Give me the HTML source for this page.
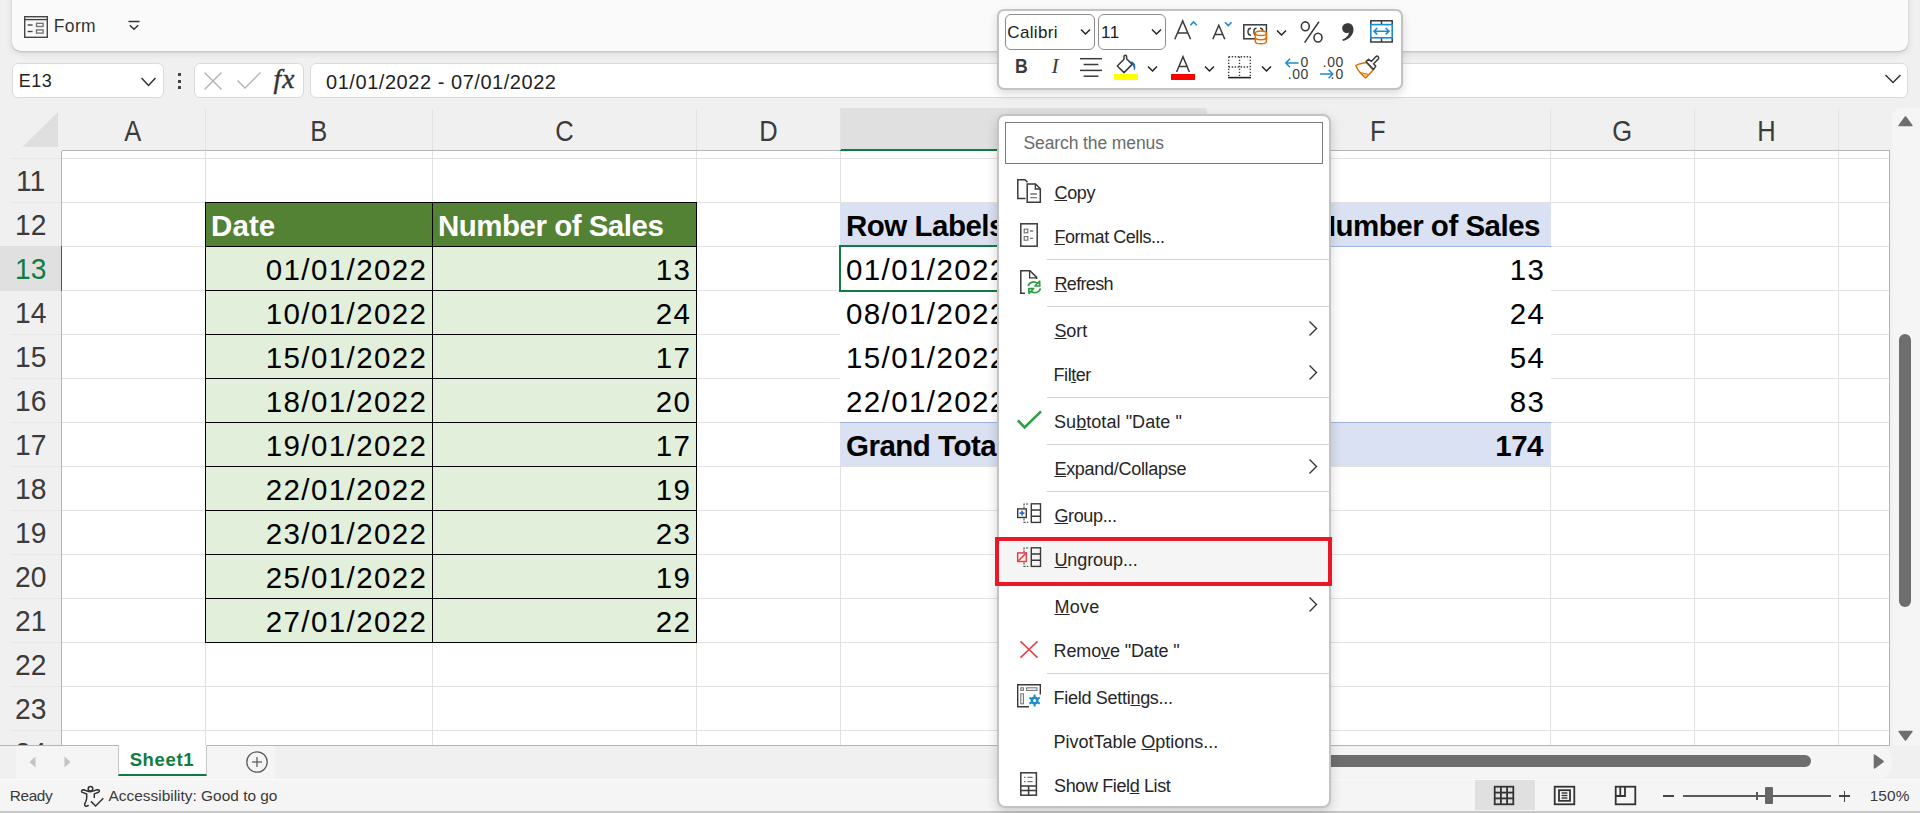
<!DOCTYPE html>
<html>
<head>
<meta charset="utf-8">
<title>Excel</title>
<style>
*{box-sizing:border-box;margin:0;padding:0}
html,body{width:1920px;height:813px;overflow:hidden}
body{background:#f0f0f0;font-family:"Liberation Sans",sans-serif;color:#262626;position:relative}
.abs{position:absolute}
.t{position:absolute;white-space:nowrap;line-height:1}
/* ribbon */
#ribbon{left:12px;top:-12px;width:1896px;height:62.7px;background:#fafafa;border-radius:9px;box-shadow:0 1px 2px rgba(0,0,0,.14),0 2px 7px rgba(0,0,0,.12)}
/* formula bar */
.fbox{position:absolute;top:63px;height:35px;background:#fff;border:1px solid #dadada;border-radius:6px}
/* grid */
#grid{left:62px;top:151px;width:1827px;height:594px;background:#fff;overflow:hidden}
.vl{position:absolute;top:0;width:1px;height:594px;background:#e1e1e1}
.hl{position:absolute;left:0;height:1px;width:1827px;background:#e1e1e1}
.colh{position:absolute;top:108px;height:42px;padding-top:1px;font-size:29px;line-height:44px;text-align:center;color:#3b3b3b}
.rowh{position:absolute;left:0;width:61px;height:44px;font-size:30px;line-height:46px;text-align:center;color:#3b3b3b}
.colh span{display:inline-block;transform:scaleX(.88)}
.rowh span{display:inline-block;transform:scaleX(.94)}
.cell{position:absolute;height:44px;font-size:29.5px;line-height:46px;color:#000;white-space:nowrap;overflow:hidden;letter-spacing:1.4px}
.r{text-align:right;padding-right:4.6px}
.l{text-align:left;padding-left:5px}
.b{font-weight:bold}
.cell.b{letter-spacing:-0.5px}
.mi{font-size:18px;color:#262626}
.mi u{text-decoration:underline;text-decoration-thickness:1px;text-underline-offset:1px;text-decoration-skip-ink:none}
</style>
</head>
<body>
<!-- RIBBON -->
<div id="ribbon" class="abs"></div>
<!-- FORMULA BAR -->
<div class="fbox" style="left:12px;width:152px"></div>
<div class="fbox" style="left:194px;width:110px"></div>
<div class="fbox" style="left:310px;width:1598px"></div>

<svg class="abs" style="left:23px;top:15px" width="27" height="24" viewBox="0 0 27 24" fill="none" stroke="#444" stroke-width="1.4">
  <rect x="1.7" y="1.7" width="22.6" height="20.6"/>
  <line x1="1.7" y1="4.6" x2="24.3" y2="4.6"/>
  <line x1="4.6" y1="10" x2="9.6" y2="10"/>
  <line x1="4.6" y1="16.5" x2="9.6" y2="16.5"/>
  <rect x="13.5" y="8.3" width="6.6" height="3.2" stroke="#777"/>
  <rect x="13.5" y="14.9" width="6.6" height="3.2" stroke="#777"/>
</svg>
<div class="t" id="tForm" style="font-size:17.5px;color:#333;left:53.83px;top:17.7px;letter-spacing:0.323px">Form</div>
<svg class="abs" style="left:127px;top:20px" width="14" height="11" viewBox="0 0 14 11" fill="none" stroke="#333" stroke-width="1.5">
  <line x1="1.5" y1="1.5" x2="12.5" y2="1.5"/>
  <polyline points="2.8,5.2 7,9.2 11.2,5.2"/>
</svg>


<div class="t" id="tE13" style="font-size:18px;color:#1f1f1f;left:18.67px;top:72.0px;letter-spacing:0.53px">E13</div>
<svg class="abs" style="left:140px;top:76px" width="17" height="12" viewBox="0 0 17 12" fill="none" stroke="#333" stroke-width="1.5"><polyline points="1.5,2 8.5,9.5 15.5,2"/></svg>
<div class="abs" style="left:177.5px;top:73px;width:3px;height:3px;background:#444"></div>
<div class="abs" style="left:177.5px;top:79.5px;width:3px;height:3px;background:#444"></div>
<div class="abs" style="left:177.5px;top:86px;width:3px;height:3px;background:#444"></div>
<svg class="abs" style="left:203px;top:71px" width="20" height="20" viewBox="0 0 20 20" fill="none" stroke="#b4b4b4" stroke-width="1.4"><line x1="1.5" y1="1.5" x2="18.5" y2="18.5"/><line x1="18.5" y1="1.5" x2="1.5" y2="18.5"/></svg>
<svg class="abs" style="left:236px;top:71px" width="26" height="20" viewBox="0 0 26 20" fill="none" stroke="#b4b4b4" stroke-width="1.4"><polyline points="1.5,9.5 9,17 24.5,1.5"/></svg>
<div class="t" id="tFx" style="left:273.5px;top:65px;font-family:'Liberation Serif',serif;font-style:italic;font-size:27.5px;color:#333;letter-spacing:1.2px;-webkit-text-stroke:0.45px #333">fx</div>
<div class="t" id="tFormula" style="font-size:20px;color:#1f1f1f;left:326.02px;top:72.08px;letter-spacing:0.546px">01/01/2022 - 07/01/2022</div>
<svg class="abs" style="left:1884px;top:73px" width="18" height="12" viewBox="0 0 18 12" fill="none" stroke="#333" stroke-width="1.5"><polyline points="1.5,2 9,9.5 16.5,2"/></svg>

<!-- HEADERS -->
<svg class="abs" style="left:22px;top:112px" width="37" height="36" viewBox="0 0 37 36"><polygon points="36,0 36,35 0.5,35" fill="#dfdfdf"/></svg>
<div class="abs" style="left:840px;top:108px;width:366px;height:42px;background:#e0e0e0"></div>
<div class="abs" style="left:62px;top:150px;width:1828px;height:1px;background:#b5b5b5"></div>
<div class="abs" style="left:840px;top:149px;width:366px;height:2px;background:#107c41"></div>
<div class="abs" style="left:205px;top:109px;width:1px;height:41px;background:#e3e3e3"></div>
<div class="abs" style="left:432px;top:109px;width:1px;height:41px;background:#e3e3e3"></div>
<div class="abs" style="left:696px;top:109px;width:1px;height:41px;background:#e3e3e3"></div>
<div class="abs" style="left:840px;top:109px;width:1px;height:41px;background:#e3e3e3"></div>
<div class="abs" style="left:1206px;top:109px;width:1px;height:41px;background:#e3e3e3"></div>
<div class="abs" style="left:1550px;top:109px;width:1px;height:41px;background:#e3e3e3"></div>
<div class="abs" style="left:1694px;top:109px;width:1px;height:41px;background:#e3e3e3"></div>
<div class="abs" style="left:1838px;top:109px;width:1px;height:41px;background:#e3e3e3"></div>
<div class="colh" style="left:61px;width:144px"><span>A</span></div>
<div class="colh" style="left:205px;width:227px"><span>B</span></div>
<div class="colh" style="left:432px;width:264px"><span>C</span></div>
<div class="colh" style="left:696px;width:144px"><span>D</span></div>
<div class="colh" style="left:1206px;width:344px"><span>F</span></div>
<div class="colh" style="left:1550px;width:144px"><span>G</span></div>
<div class="colh" style="left:1694px;width:144px"><span>H</span></div>
<div class="abs" style="left:61px;top:151px;width:1px;height:594px;background:#b5b5b5"></div>
<div class="abs" style="left:60px;top:246px;width:2px;height:45px;background:#107c41"></div>
<div class="abs" style="left:10px;top:158px;width:51px;height:1px;background:#e7e7e7"></div>
<div class="abs" style="left:10px;top:202px;width:51px;height:1px;background:#e7e7e7"></div>
<div class="abs" style="left:10px;top:246px;width:51px;height:1px;background:#e7e7e7"></div>
<div class="abs" style="left:10px;top:290px;width:51px;height:1px;background:#e7e7e7"></div>
<div class="abs" style="left:10px;top:334px;width:51px;height:1px;background:#e7e7e7"></div>
<div class="abs" style="left:10px;top:378px;width:51px;height:1px;background:#e7e7e7"></div>
<div class="abs" style="left:10px;top:422px;width:51px;height:1px;background:#e7e7e7"></div>
<div class="abs" style="left:10px;top:466px;width:51px;height:1px;background:#e7e7e7"></div>
<div class="abs" style="left:10px;top:510px;width:51px;height:1px;background:#e7e7e7"></div>
<div class="abs" style="left:10px;top:554px;width:51px;height:1px;background:#e7e7e7"></div>
<div class="abs" style="left:10px;top:598px;width:51px;height:1px;background:#e7e7e7"></div>
<div class="abs" style="left:10px;top:642px;width:51px;height:1px;background:#e7e7e7"></div>
<div class="abs" style="left:10px;top:686px;width:51px;height:1px;background:#e7e7e7"></div>
<div class="abs" style="left:10px;top:730px;width:51px;height:1px;background:#e7e7e7"></div>
<div class="abs" style="left:0;top:246px;width:61px;height:45px;background:#e0e0e0"></div>
<div class="rowh" style="top:158px"><span>11</span></div>
<div class="rowh" style="top:202px"><span>12</span></div>
<div class="rowh" style="top:246px;color:#107c41"><span>13</span></div>
<div class="rowh" style="top:290px"><span>14</span></div>
<div class="rowh" style="top:334px"><span>15</span></div>
<div class="rowh" style="top:378px"><span>16</span></div>
<div class="rowh" style="top:422px"><span>17</span></div>
<div class="rowh" style="top:466px"><span>18</span></div>
<div class="rowh" style="top:510px"><span>19</span></div>
<div class="rowh" style="top:554px"><span>20</span></div>
<div class="rowh" style="top:598px"><span>21</span></div>
<div class="rowh" style="top:642px"><span>22</span></div>
<div class="rowh" style="top:686px"><span>23</span></div>
<div class="rowh" style="top:730px"><span>24</span></div>
<!-- GRID -->
<div id="grid" class="abs">
<div class="hl" style="top:7px"></div>
<div class="hl" style="top:51px"></div>
<div class="hl" style="top:95px"></div>
<div class="hl" style="top:139px"></div>
<div class="hl" style="top:183px"></div>
<div class="hl" style="top:227px"></div>
<div class="hl" style="top:271px"></div>
<div class="hl" style="top:315px"></div>
<div class="hl" style="top:359px"></div>
<div class="hl" style="top:403px"></div>
<div class="hl" style="top:447px"></div>
<div class="hl" style="top:491px"></div>
<div class="hl" style="top:535px"></div>
<div class="hl" style="top:579px"></div>
<div class="vl" style="left:143px"></div>
<div class="vl" style="left:370px"></div>
<div class="vl" style="left:634px"></div>
<div class="vl" style="left:778px"></div>
<div class="vl" style="left:1144px"></div>
<div class="vl" style="left:1488px"></div>
<div class="vl" style="left:1632px"></div>
<div class="vl" style="left:1776px"></div>
<div class="abs" style="left:143px;top:51px;width:492px;height:45px;background:#548235"></div>
<div class="abs" style="left:143px;top:95px;width:492px;height:397px;background:#e2efda"></div>
<div class="abs" style="left:143px;top:51px;width:492px;height:1px;background:#000"></div>
<div class="abs" style="left:143px;top:95px;width:492px;height:1px;background:#000"></div>
<div class="abs" style="left:143px;top:139px;width:492px;height:1px;background:#000"></div>
<div class="abs" style="left:143px;top:183px;width:492px;height:1px;background:#000"></div>
<div class="abs" style="left:143px;top:227px;width:492px;height:1px;background:#000"></div>
<div class="abs" style="left:143px;top:271px;width:492px;height:1px;background:#000"></div>
<div class="abs" style="left:143px;top:315px;width:492px;height:1px;background:#000"></div>
<div class="abs" style="left:143px;top:359px;width:492px;height:1px;background:#000"></div>
<div class="abs" style="left:143px;top:403px;width:492px;height:1px;background:#000"></div>
<div class="abs" style="left:143px;top:447px;width:492px;height:1px;background:#000"></div>
<div class="abs" style="left:143px;top:491px;width:492px;height:1px;background:#000"></div>
<div class="abs" style="left:143px;top:51px;width:1px;height:441px;background:#000"></div>
<div class="abs" style="left:370px;top:51px;width:1px;height:441px;background:#000"></div>
<div class="abs" style="left:634px;top:51px;width:1px;height:441px;background:#000"></div>
<div class="cell l b" style="left:144px;top:52px;width:226px;color:#fff;letter-spacing:0.1px">Date</div>
<div class="cell l b" style="left:371px;top:52px;width:263px;color:#fff">Number of Sales</div>
<div class="cell r" style="left:144px;top:96px;width:226px">01/01/2022</div>
<div class="cell r" style="left:371px;top:96px;width:263px">13</div>
<div class="cell r" style="left:144px;top:140px;width:226px">10/01/2022</div>
<div class="cell r" style="left:371px;top:140px;width:263px">24</div>
<div class="cell r" style="left:144px;top:184px;width:226px">15/01/2022</div>
<div class="cell r" style="left:371px;top:184px;width:263px">17</div>
<div class="cell r" style="left:144px;top:228px;width:226px">18/01/2022</div>
<div class="cell r" style="left:371px;top:228px;width:263px">20</div>
<div class="cell r" style="left:144px;top:272px;width:226px">19/01/2022</div>
<div class="cell r" style="left:371px;top:272px;width:263px">17</div>
<div class="cell r" style="left:144px;top:316px;width:226px">22/01/2022</div>
<div class="cell r" style="left:371px;top:316px;width:263px">19</div>
<div class="cell r" style="left:144px;top:360px;width:226px">23/01/2022</div>
<div class="cell r" style="left:371px;top:360px;width:263px">23</div>
<div class="cell r" style="left:144px;top:404px;width:226px">25/01/2022</div>
<div class="cell r" style="left:371px;top:404px;width:263px">19</div>
<div class="cell r" style="left:144px;top:448px;width:226px">27/01/2022</div>
<div class="cell r" style="left:371px;top:448px;width:263px">22</div>
<div class="abs" style="left:778px;top:52px;width:711px;height:43px;background:#d9e1f2"></div>
<div class="abs" style="left:778px;top:95px;width:711px;height:177px;background:#fff"></div>
<div class="abs" style="left:778px;top:272px;width:711px;height:43px;background:#d9e1f2"></div>
<div class="abs" style="left:778px;top:95px;width:711px;height:1px;background:#9db4e0"></div>
<div class="abs" style="left:778px;top:271px;width:711px;height:1px;background:#9db4e0"></div>
<div class="cell l b" style="left:779px;top:52px;width:365px">Row Labels</div>
<div class="cell r b" style="left:1145px;top:52px;width:343px;padding-right:10px">Sum of Number of Sales</div>
<div class="cell l" style="left:779px;top:96px;width:365px">01/01/2022 - 07/01/2022</div>
<div class="cell r" style="left:1145px;top:96px;width:343px">13</div>
<div class="cell l" style="left:779px;top:140px;width:365px">08/01/2022 - 14/01/2022</div>
<div class="cell r" style="left:1145px;top:140px;width:343px">24</div>
<div class="cell l" style="left:779px;top:184px;width:365px">15/01/2022 - 21/01/2022</div>
<div class="cell r" style="left:1145px;top:184px;width:343px">54</div>
<div class="cell l" style="left:779px;top:228px;width:365px">22/01/2022 - 28/01/2022</div>
<div class="cell r" style="left:1145px;top:228px;width:343px">83</div>
<div class="cell l b" style="left:779px;top:272px;width:365px">Grand Total</div>
<div class="cell r b" style="left:1145px;top:272px;width:343px;padding-right:7px">174</div>
<div class="abs" style="left:777px;top:94px;width:369px;height:47px;border:2px solid #107c41"></div>
</div>
<!-- vertical scrollbar -->
<div class="abs" style="left:1889px;top:151px;width:1px;height:594px;background:#b5b5b5"></div>
<div class="abs" style="left:1892px;top:108px;width:40px;height:640px;background:#f5f5f5;border-radius:9px"></div>
<svg class="abs" style="left:1897.5px;top:115.5px" width="15" height="11" viewBox="0 0 15 11"><path d="M1.2 9.5 L7.5 1 L13.8 9.5 Z" fill="#6e6e6e" stroke="#6e6e6e" stroke-width="1.6" stroke-linejoin="round"/></svg>
<svg class="abs" style="left:1897.5px;top:730px" width="15" height="11" viewBox="0 0 15 11"><path d="M1.2 1.5 L7.5 10 L13.8 1.5 Z" fill="#6e6e6e" stroke="#6e6e6e" stroke-width="1.6" stroke-linejoin="round"/></svg>
<div class="abs" style="left:1899px;top:334px;width:12px;height:273px;background:#6e6e6e;border-radius:6px"></div>
<!-- tab bar -->
<div class="abs" style="left:0;top:746px;width:1920px;height:33px;background:#f0f0f0"></div>
<div class="abs" style="left:16px;top:746px;width:259px;height:33px;background:#f5f5f5"></div>
<div class="abs" style="left:0;top:745px;width:1890px;height:1px;background:#b5b5b5"></div>
<!-- h scrollbar -->
<div class="abs" style="left:1290px;top:747px;width:602px;height:31px;background:#f5f5f5;border-radius:12px"></div>
<div class="abs" style="left:1300px;top:755px;width:511px;height:12px;background:#6e6e6e;border-radius:6px"></div>
<svg class="abs" style="left:1873px;top:754px" width="11" height="15" viewBox="0 0 11 15"><path d="M1.5 1.2 L10 7.5 L1.5 13.8 Z" fill="#6e6e6e" stroke="#6e6e6e" stroke-width="1.6" stroke-linejoin="round"/></svg>
<!-- nav arrows -->
<svg class="abs" style="left:29px;top:756px" width="7" height="12" viewBox="0 0 7 12"><path d="M6.5 0.5 L0.5 6 L6.5 11.5 Z" fill="#c3c3c3"/></svg>
<svg class="abs" style="left:64px;top:756px" width="7" height="12" viewBox="0 0 7 12"><path d="M0.5 0.5 L6.5 6 L0.5 11.5 Z" fill="#c3c3c3"/></svg>
<!-- sheet tab -->
<div class="abs" style="left:118px;top:745px;width:89px;height:31px;background:#fff;border-left:1px solid #c6c6c6;border-right:1px solid #c6c6c6;border-bottom:2px solid #107c41"></div>
<div class="t b" id="tSheet" style="font-size:18.5px;color:#107c41;left:129.64px;top:751.0px;letter-spacing:0.648px">Sheet1</div>
<svg class="abs" style="left:245px;top:750px" width="24" height="24" viewBox="0 0 24 24" fill="none" stroke="#5f5f5f" stroke-width="1.3"><circle cx="12" cy="12" r="10.2"/><line x1="12" y1="7" x2="12" y2="17"/><line x1="7" y1="12" x2="17" y2="12"/></svg>
<!-- status bar -->
<div class="abs" style="left:0;top:779px;width:1920px;height:32px;background:#f5f5f5;border-top:1px solid #fbfbfb"></div>
<div class="abs" style="left:0;top:811px;width:1920px;height:2px;background:#c6c6c6"></div>
<div class="t" id="tReady" style="font-size:15.4px;color:#3a3a3a;left:9.73px;top:788.2px;letter-spacing:-0.375px">Ready</div>
<svg class="abs" style="left:80px;top:784px" width="25" height="24" viewBox="0 0 25 24" fill="none" stroke="#333" stroke-width="1.5" stroke-linecap="round" stroke-linejoin="round">
 <circle cx="10.5" cy="4.8" r="2.3"/>
 <path d="M3.9 5.9 C6 6.2 8 7.7 10.5 7.7 C13 7.7 15.2 6 17.3 5.7"/>
 <path d="M3.9 5.9 C1.6 5.5 0.8 7.7 2.4 8.4 L6.7 10 L6.7 14 C6.7 16.4 5.2 18.6 4.7 20.2 C4.2 22 6 22.8 8.2 21.5"/>
 <path d="M17.3 5.7 C19.5 5.3 20.1 7.6 18.5 8.3 L14.3 9.9 L14.3 13.6"/>
 <path d="M11 17.4 L15.6 22 L23.3 14.3" stroke-linecap="butt" stroke-linejoin="miter"/>
</svg>
<div class="t" id="tAcc" style="font-size:15.4px;color:#3a3a3a;left:108.51px;top:788.2px;letter-spacing:0.017px">Accessibility: Good to go</div>
<!-- view buttons -->
<div class="abs" style="left:1475px;top:780px;width:60px;height:30px;background:#e0e0e0"></div>
<svg class="abs" style="left:1493px;top:785px" width="22" height="21" viewBox="0 0 22 21" fill="none" stroke="#333" stroke-width="1.8"><rect x="1.7" y="1.7" width="18.6" height="17.6"/><line x1="7.9" y1="1.7" x2="7.9" y2="19.3"/><line x1="14.1" y1="1.7" x2="14.1" y2="19.3"/><line x1="1.7" y1="7.6" x2="20.3" y2="7.6"/><line x1="1.7" y1="13.4" x2="20.3" y2="13.4"/></svg>
<svg class="abs" style="left:1553px;top:785px" width="23" height="21" viewBox="0 0 23 21" fill="none" stroke="#333" stroke-width="1.8"><rect x="1.7" y="1.7" width="19.6" height="17.6"/><rect x="6" y="5.2" width="11" height="10.6"/><g stroke-width="1.4"><line x1="8.6" y1="8" x2="14.4" y2="8"/><line x1="8.6" y1="10.5" x2="14.4" y2="10.5"/><line x1="8.6" y1="13" x2="14.4" y2="13"/></g></svg>
<svg class="abs" style="left:1614px;top:785px" width="23" height="21" viewBox="0 0 23 21" fill="none" stroke="#333" stroke-width="1.8"><rect x="1.7" y="1.7" width="19.6" height="17.6"/><polyline points="1.7,11 11,11 11,1.7"/><line x1="6.3" y1="1.7" x2="6.3" y2="11"/></svg>
<!-- zoom -->
<div class="abs" style="left:1663px;top:795.3px;width:11px;height:1.3px;background:#444"></div>
<div class="abs" style="left:1683px;top:795px;width:148px;height:2px;background:#5a5a5a"></div>
<div class="abs" style="left:1756px;top:792px;width:2px;height:8px;background:#5a5a5a"></div>
<div class="abs" style="left:1765px;top:787px;width:8px;height:17px;background:#666;border-radius:1px"></div>
<div class="abs" style="left:1839px;top:795.3px;width:11px;height:1.3px;background:#444"></div>
<div class="abs" style="left:1843.8px;top:790.5px;width:1.3px;height:11px;background:#444"></div>
<div class="t" id="tZoom" style="font-size:15.4px;color:#3a3a3a;left:1869.64px;top:788.2px;letter-spacing:0.108px">150%</div>

<!--MINI-START-->
<div class="abs" id="mini" style="left:997px;top:9px;width:406px;height:81px;background:#fff;border:2px solid #c2c2c2;border-radius:7px;box-shadow:0 4px 10px rgba(0,0,0,.14)"></div>
<div class="abs" style="left:1005px;top:14px;width:90px;height:36px;border:1px solid #8c8c8c;border-radius:6px;background:#fff"></div>
<div class="abs" style="left:1098px;top:14px;width:68px;height:36px;border:1px solid #8c8c8c;border-radius:6px;background:#fff"></div>
<div class="t" id="tCalibri" style="font-size:17px;color:#222;left:1007.35px;top:24.0px;letter-spacing:0.323px">Calibri</div>
<div class="t" id="t11" style="font-size:17px;color:#222;left:1101.05px;top:24.0px;letter-spacing:0.433px">11</div>
<svg class="abs" style="left:1080px;top:28px" width="11" height="8" viewBox="0 0 11 8" fill="none" stroke="#222" stroke-width="1.5"><polyline points="1,1.5 5.5,6 10,1.5"/></svg>
<svg class="abs" style="left:1151px;top:28px" width="11" height="8" viewBox="0 0 11 8" fill="none" stroke="#222" stroke-width="1.5"><polyline points="1,1.5 5.5,6 10,1.5"/></svg>
<!-- grow / shrink -->
<svg class="abs" style="left:1173px;top:19px" width="26" height="22" viewBox="0 0 26 22" fill="none"><path d="M1.8 20.3 L9.7 2 L17.6 20.3 M4.6 14 L14.8 14" stroke="#3a3a3a" stroke-width="1.5"/><polyline points="17.3,6.3 20.6,3 23.9,6.3" stroke="#1e8bcd" stroke-width="1.6"/></svg>
<svg class="abs" style="left:1211px;top:19px" width="24" height="22" viewBox="0 0 24 22" fill="none"><path d="M1.8 20.3 L7.8 6.3 L13.8 20.3 M3.9 15.4 L11.7 15.4" stroke="#3a3a3a" stroke-width="1.5"/><polyline points="14,3.2 17.3,6.5 20.6,3.2" stroke="#1e8bcd" stroke-width="1.6"/></svg>
<!-- currency -->
<svg class="abs" style="left:1242px;top:23px" width="27" height="22" viewBox="0 0 27 22" fill="none"><rect x="1.8" y="1.8" width="22.6" height="14" stroke="#3a3a3a" stroke-width="1.5"/><path d="M9 5.3 C5 5.3 5 12.3 9 12.3" stroke="#3a3a3a" stroke-width="1.5"/><path d="M14.5 5.3 C11 5.3 11 12.3 14.5 12.3 M18 5.3 C21 5.3 21 9 21 9" stroke="#3a3a3a" stroke-width="1.4"/><path d="M13.3 10.2 L13.3 18.5 C13.3 21.5 24.3 21.5 24.3 18.5 L24.3 10.2 C24.3 7.2 13.3 7.2 13.3 10.2 Z" fill="#fff" stroke="#e07000" stroke-width="1.5"/><path d="M13.3 10.2 C13.3 13.2 24.3 13.2 24.3 10.2 M13.3 14.6 C13.3 17.4 24.3 17.4 24.3 14.6" stroke="#e07000" stroke-width="1.5"/></svg>
<svg class="abs" style="left:1276px;top:29px" width="11" height="8" viewBox="0 0 11 8" fill="none" stroke="#222" stroke-width="1.5"><polyline points="1,1.5 5.5,6 10,1.5"/></svg>
<!-- percent -->
<svg class="abs" style="left:1299px;top:20px" width="26" height="24" viewBox="0 0 26 24" fill="none" stroke="#3a3a3a" stroke-width="1.6"><ellipse cx="6.3" cy="6.3" rx="4" ry="4.4"/><ellipse cx="19" cy="17.6" rx="4" ry="4.4"/><line x1="20" y1="1.6" x2="5.6" y2="22.6"/></svg>
<!-- comma -->
<svg class="abs" style="left:1340px;top:22px" width="15" height="20" viewBox="0 0 15 20"><path d="M7.8 1.2 C11.5 1.2 13.5 3.9 13.5 7.4 C13.5 12.6 9.5 17 3 19 L2.4 17.6 C6.3 16 8.6 13.6 9 10.6 C8.4 10.9 7.8 11 7 11 C4.2 11 2.2 8.9 2.2 6.2 C2.2 3.4 4.5 1.2 7.8 1.2 Z" fill="#3a3a3a"/></svg>
<!-- merge -->
<svg class="abs" style="left:1369px;top:19px" width="25" height="25" viewBox="0 0 25 25" fill="none"><rect x="1.8" y="1.8" width="21.4" height="21.2" stroke="#3a3a3a" stroke-width="1.5"/><line x1="12.5" y1="1.8" x2="12.5" y2="23" stroke="#3a3a3a" stroke-width="1.5"/><rect x="1.8" y="5.6" width="21.4" height="13.2" fill="#fff" stroke="#1e8bcd" stroke-width="1.6"/><path d="M5.2 12.2 L19.8 12.2 M8.3 9 L5 12.2 L8.3 15.4 M16.7 9 L20 12.2 L16.7 15.4" stroke="#1e8bcd" stroke-width="1.6"/></svg>
<!-- row 2 -->
<div class="t b" id="tB" style="left:1015px;top:56px;font-size:20.5px;color:#3a3a3a;transform:scaleX(.86);transform-origin:left">B</div>
<div class="t" id="tI" style="left:1051.5px;top:55.5px;font-size:21.5px;color:#3a3a3a;font-family:'Liberation Serif',serif;font-style:italic">I</div>
<svg class="abs" style="left:1079px;top:56px" width="24" height="23" viewBox="0 0 24 23" stroke="#3a3a3a" stroke-width="1.5"><line x1="1" y1="2.7" x2="23" y2="2.7"/><line x1="4.6" y1="8.5" x2="19.4" y2="8.5"/><line x1="1" y1="14.4" x2="23" y2="14.4"/><line x1="4.6" y1="20.2" x2="19.4" y2="20.2"/></svg>
<!-- fill -->
<svg class="abs" style="left:1113px;top:54px" width="27" height="27" viewBox="0 0 27 27" fill="none"><rect x="1" y="20" width="24" height="6" fill="#ffff00"/><path d="M11 5.3 L4.3 12 L11 18.6 L19.2 10.4 L13.6 4.8 L13.6 2.6 C13.6 0.9 11 0.9 11 2.6 Z" stroke="#3a3a3a" stroke-width="1.5" stroke-linejoin="round"/><path d="M17.8 8 C21.4 7.6 22.2 11.5 21.6 15.6 C21 12.6 20.2 10.4 17.8 8 Z" fill="#1a5fb4" stroke="#1a5fb4" stroke-width="1"/></svg>
<svg class="abs" style="left:1147px;top:65px" width="11" height="8" viewBox="0 0 11 8" fill="none" stroke="#222" stroke-width="1.5"><polyline points="1,1.5 5.5,6 10,1.5"/></svg>
<!-- font color -->
<svg class="abs" style="left:1170px;top:54px" width="27" height="27" viewBox="0 0 27 27" fill="none"><rect x="1" y="20" width="24" height="6" fill="#ff0000"/><path d="M6.6 18 L13 2.6 L19.4 18 M8.8 12.6 L17.2 12.6" stroke="#3a3a3a" stroke-width="1.5"/></svg>
<svg class="abs" style="left:1204px;top:65px" width="11" height="8" viewBox="0 0 11 8" fill="none" stroke="#222" stroke-width="1.5"><polyline points="1,1.5 5.5,6 10,1.5"/></svg>
<!-- borders -->
<svg class="abs" style="left:1227px;top:55px" width="25" height="25" viewBox="0 0 25 25" fill="none" stroke="#3a3a3a"><path d="M1.7 1.7 H23.3 M1.7 12 H23.3 M1.7 1.7 V21 M12.5 1.7 V21 M23.3 1.7 V21" stroke-width="1.4" stroke-dasharray="1.4 1.6"/><line x1="1" y1="22.6" x2="24" y2="22.6" stroke-width="1.6" stroke="#222"/></svg>
<svg class="abs" style="left:1261px;top:65px" width="11" height="8" viewBox="0 0 11 8" fill="none" stroke="#222" stroke-width="1.5"><polyline points="1,1.5 5.5,6 10,1.5"/></svg>
<!-- decrease decimal -->
<svg class="abs" style="left:1284px;top:58px" width="16" height="10" viewBox="0 0 16 10" fill="none" stroke="#1e8bcd" stroke-width="1.5"><path d="M1.8 5 L14.5 5 M6 0.8 L1.8 5 L6 9.2"/></svg>
<div class="t" id="tD1" style="font-size:14px;color:#3a3a3a;left:1300.62px;top:54.5px;letter-spacing:0.0px">0</div>
<div class="t" id="tD2" style="font-size:14px;color:#3a3a3a;left:1287.72px;top:66.9px;letter-spacing:0.6px">.00</div>
<!-- increase decimal -->
<div class="t" id="tD3" style="font-size:14px;color:#3a3a3a;left:1322.72px;top:54.5px;letter-spacing:0.609px">.00</div>
<svg class="abs" style="left:1319px;top:69px" width="16" height="10" viewBox="0 0 16 10" fill="none" stroke="#1e8bcd" stroke-width="1.5"><path d="M1 5 L13.8 5 M9.6 0.8 L13.8 5 L9.6 9.2"/></svg>
<div class="t" id="tD4" style="font-size:14px;color:#3a3a3a;left:1330.58px;top:66.9px;letter-spacing:1.128px">.0</div>
<!-- brush -->
<svg class="abs" style="left:1354px;top:54px" width="27" height="26" viewBox="0 0 27 26" fill="none"><path d="M12.5 8.6 C8 9.4 4.5 9.5 1.8 11.8 C4 16.5 7 20.5 11.6 24 L19.2 16 Z" fill="#fff" stroke="#e07000" stroke-width="1.5" stroke-linejoin="round"/><path d="M6.6 18.6 L14.8 20.4 L11.6 24 Z" fill="#f7c873" stroke="#e07000" stroke-width="1"/><path d="M12 7.6 L14.6 5.2 L17.3 7.5 L22 2.6 C23.4 1.2 25.7 3.4 24.3 4.9 L19.6 9.7 L21.8 12.2 L19.6 15.4 Z" fill="#fff" stroke="#3a3a3a" stroke-width="1.5" stroke-linejoin="round"/></svg>
<!--MINI-END-->

<!--MENU-START-->
<div class="abs" id="menu" style="left:997px;top:114px;width:334px;height:694px;background:#fff;border:2px solid #c3c3c3;border-radius:8px;box-shadow:0 4px 12px rgba(0,0,0,.17)"></div>
<div class="abs" style="left:1005px;top:122px;width:318px;height:42px;border:1px solid #7a7a7a;background:#fff"></div>
<div class="t" id="mSearch" style="font-size:17.5px;color:#6b6b6b;left:1023.47px;top:135.0px;letter-spacing:-0.105px">Search the menus</div>
<div class="abs" style="left:1047px;top:259px;width:283px;height:1px;background:#d2d2d2"></div>
<div class="abs" style="left:1047px;top:306px;width:283px;height:1px;background:#d2d2d2"></div>
<div class="abs" style="left:1047px;top:397px;width:283px;height:1px;background:#d2d2d2"></div>
<div class="abs" style="left:1047px;top:444px;width:283px;height:1px;background:#d2d2d2"></div>
<div class="abs" style="left:1047px;top:491px;width:283px;height:1px;background:#d2d2d2"></div>
<div class="abs" style="left:1047px;top:673px;width:283px;height:1px;background:#d2d2d2"></div>
<div class="abs" style="left:995px;top:537px;width:337px;height:49px;background:#f5f5f5;border:4.5px solid #e81828"></div>
<div class="t mi" id="mCopy" style=";left:1054.45px;top:184.0px;letter-spacing:-0.314px"><u>C</u>opy</div>
<div class="t mi" id="mFormat" style=";left:1054.45px;top:228.0px;letter-spacing:-0.455px"><u>F</u>ormat Cells...</div>
<div class="t mi" id="mRefresh" style=";left:1054.45px;top:275.0px;letter-spacing:-0.657px"><u>R</u>efresh</div>
<div class="t mi" id="mSort" style=";left:1054.45px;top:322.0px;letter-spacing:-0.098px"><u>S</u>ort</div>
<div class="t mi" id="mFilter" style=";left:1053.56px;top:366.2px;letter-spacing:-0.446px">Fil<u>t</u>er</div>
<div class="t mi" id="mSubtotal" style=";left:1054.02px;top:413.2px;letter-spacing:0.062px">Su<u>b</u>total "Date "</div>
<div class="t mi" id="mExpand" style=";left:1054.45px;top:460.0px;letter-spacing:-0.291px"><u>E</u>xpand/Collapse</div>
<div class="t mi" id="mGroup" style=";left:1054.45px;top:507.0px;letter-spacing:-0.368px"><u>G</u>roup...</div>
<div class="t mi" id="mUngroup" style=";left:1054.45px;top:550.87px;letter-spacing:-0.088px"><u>U</u>ngroup...</div>
<div class="t mi" id="mMove" style=";left:1054.45px;top:598.0px;letter-spacing:0.305px"><u>M</u>ove</div>
<div class="t mi" id="mRemove" style=";left:1053.56px;top:642.2px;letter-spacing:-0.135px">Remo<u>v</u>e "Date "</div>
<div class="t mi" id="mField" style=";left:1053.56px;top:689.2px;letter-spacing:-0.289px">Field Setti<u>n</u>gs...</div>
<div class="t mi" id="mPivot" style=";left:1053.56px;top:733.2px;letter-spacing:-0.022px">PivotTable <u>O</u>ptions...</div>
<div class="t mi" id="mShow" style=";left:1054.02px;top:777.2px;letter-spacing:-0.374px">Show Fiel<u>d</u> List</div>
<svg class="abs" style="left:1306.5px;top:319.7px" width="12" height="17" viewBox="0 0 12 17" fill="none" stroke="#333" stroke-width="1.4"><polyline points="2.5,1.5 9.5,8.5 2.5,15.5"/></svg>
<svg class="abs" style="left:1306.5px;top:363.7px" width="12" height="17" viewBox="0 0 12 17" fill="none" stroke="#333" stroke-width="1.4"><polyline points="2.5,1.5 9.5,8.5 2.5,15.5"/></svg>
<svg class="abs" style="left:1306.5px;top:457.7px" width="12" height="17" viewBox="0 0 12 17" fill="none" stroke="#333" stroke-width="1.4"><polyline points="2.5,1.5 9.5,8.5 2.5,15.5"/></svg>
<svg class="abs" style="left:1306.5px;top:595.7px" width="12" height="17" viewBox="0 0 12 17" fill="none" stroke="#333" stroke-width="1.4"><polyline points="2.5,1.5 9.5,8.5 2.5,15.5"/></svg>
<!-- copy -->
<svg class="abs" style="left:1016px;top:178px" width="27" height="26" viewBox="0 0 27 26" fill="none" stroke="#3a3a3a" stroke-width="1.5"><path d="M9.5 20.5 L1.8 20.5 L1.8 1.8 L9 1.8 L11.5 4.3"/><path d="M11.2 6 L19.5 6 L24.3 10.8 L24.3 24.2 L11.2 24.2 Z" fill="#fff"/><path d="M19.3 6.2 L19.3 11 L24.1 11" stroke-width="1.3"/><path d="M14.3 16 H21 M14.3 19.6 H21" stroke="#777" stroke-width="1.3"/></svg>
<!-- format cells -->
<svg class="abs" style="left:1019px;top:222px" width="20" height="26" viewBox="0 0 20 26" fill="none" stroke="#3a3a3a" stroke-width="1.5"><rect x="1.8" y="1.8" width="16.4" height="22.4"/><rect x="5.2" y="7.2" width="3.6" height="3.6" stroke="#777" stroke-width="1.2"/><rect x="5.2" y="14.6" width="3.6" height="3.6" stroke="#777" stroke-width="1.2"/><path d="M11 9 H14.2 M11 16.4 H14.2" stroke="#777" stroke-width="1.3"/></svg>
<!-- refresh -->
<svg class="abs" style="left:1019px;top:269px" width="24" height="27" viewBox="0 0 24 27" fill="none"><path d="M6 24.2 L1.8 24.2 L1.8 1.8 L11 1.8 L17.6 8.4 L17.6 10" stroke="#3a3a3a" stroke-width="1.5"/><path d="M10.6 2 L10.6 8.8 L17.4 8.8" stroke="#3a3a3a" stroke-width="1.3"/><path d="M9.2 17.2 C9.8 13.6 14.4 11.4 18.6 14.4 L20.6 12.2 L20.8 17 L16 17 L18 15" stroke="#2e9e44" stroke-width="1.7" stroke-linejoin="round"/><path d="M21.4 19.4 C20.8 23 16.2 25.2 12 22.2 L10 24.4 L9.8 19.6 L14.6 19.6 L12.6 21.6" stroke="#2e9e44" stroke-width="1.7" stroke-linejoin="round"/></svg>
<!-- check -->
<svg class="abs" style="left:1016px;top:409px" width="27" height="22" viewBox="0 0 27 22" fill="none" stroke="#2e9e44" stroke-width="2.6"><polyline points="1.8,11.4 8.6,18.4 25,2.4"/></svg>
<!-- group -->
<svg class="abs" style="left:1016px;top:502px" width="27" height="23" viewBox="0 0 27 23" fill="none" stroke="#3a3a3a" stroke-width="1.4"><rect x="15.3" y="1.8" width="9.2" height="18.6"/><path d="M15.3 8 H24.5 M15.3 14.2 H24.5"/><path d="M12.2 2 H8 V6 M8 16.4 V20.4 H12.2" stroke="#555" stroke-width="1.2" stroke-dasharray="2.2 1.2"/><rect x="1.7" y="6.9" width="8.6" height="8.6" fill="#fff"/><path d="M6 8.8 V13.6 M3.6 11.2 H8.4" stroke="#1e6fd0" stroke-width="1.7"/></svg>
<!-- ungroup -->
<svg class="abs" style="left:1016px;top:546px" width="27" height="23" viewBox="0 0 27 23" fill="none" stroke="#3a3a3a" stroke-width="1.4"><rect x="15.3" y="1.8" width="9.2" height="18.6" fill="#f5f5f5"/><path d="M15.3 8 H24.5 M15.3 14.2 H24.5"/><path d="M12.2 2 H8 V6 M8 16.4 V20.4 H12.2" stroke="#555" stroke-width="1.2" stroke-dasharray="2.2 1.2"/><rect x="1.7" y="6.9" width="8.6" height="8.6" fill="#f5f5f5" stroke="#e8424a" stroke-width="1.5"/><path d="M2.2 15 L9.8 7.4" stroke="#e8424a" stroke-width="1.5"/></svg>
<!-- remove x -->
<svg class="abs" style="left:1019px;top:640px" width="20" height="19" viewBox="0 0 20 19" fill="none" stroke="#e8424a" stroke-width="1.6"><path d="M1.5 1.3 L18.5 17.7 M18.5 1.3 L1.5 17.7"/></svg>
<!-- field settings -->
<svg class="abs" style="left:1016px;top:683px" width="27" height="26" viewBox="0 0 27 26" fill="none" stroke="#3a3a3a" stroke-width="1.4"><path d="M13 23.8 L1.7 23.8 L1.7 1.7 L24.3 1.7 L24.3 11.5"/><rect x="4.8" y="4.8" width="2.6" height="2.6" stroke="#777" stroke-width="1.1"/><rect x="10.6" y="4.8" width="10.4" height="2.6" stroke="#777" stroke-width="1.1"/><rect x="4.8" y="10.8" width="2.6" height="10" stroke="#777" stroke-width="1.1"/><g stroke="#1e8bcd" stroke-width="2"><path d="M18.6 11.6 V23.6 M13.4 14.6 L23.8 20.6 M13.4 20.6 L23.8 14.6"/></g><circle cx="18.6" cy="17.6" r="4" fill="#1e8bcd" stroke="none"/><circle cx="18.6" cy="17.6" r="1.5" fill="#fff" stroke="none"/></svg>
<!-- show field list -->
<svg class="abs" style="left:1019px;top:771px" width="20" height="26" viewBox="0 0 20 26" fill="none" stroke="#3a3a3a" stroke-width="1.5"><rect x="1.8" y="1.8" width="15.6" height="22.4"/><path d="M1.8 15 H17.4 M1.8 19.6 H17.4 M9.6 15 V24.2"/><path d="M5 6.4 H6.6 M8.4 6.4 H13.6 M5 10.6 H6.6 M8.4 10.6 H13.6" stroke="#777" stroke-width="1.3"/></svg>

<!--MENU-END-->
</body>
</html>
